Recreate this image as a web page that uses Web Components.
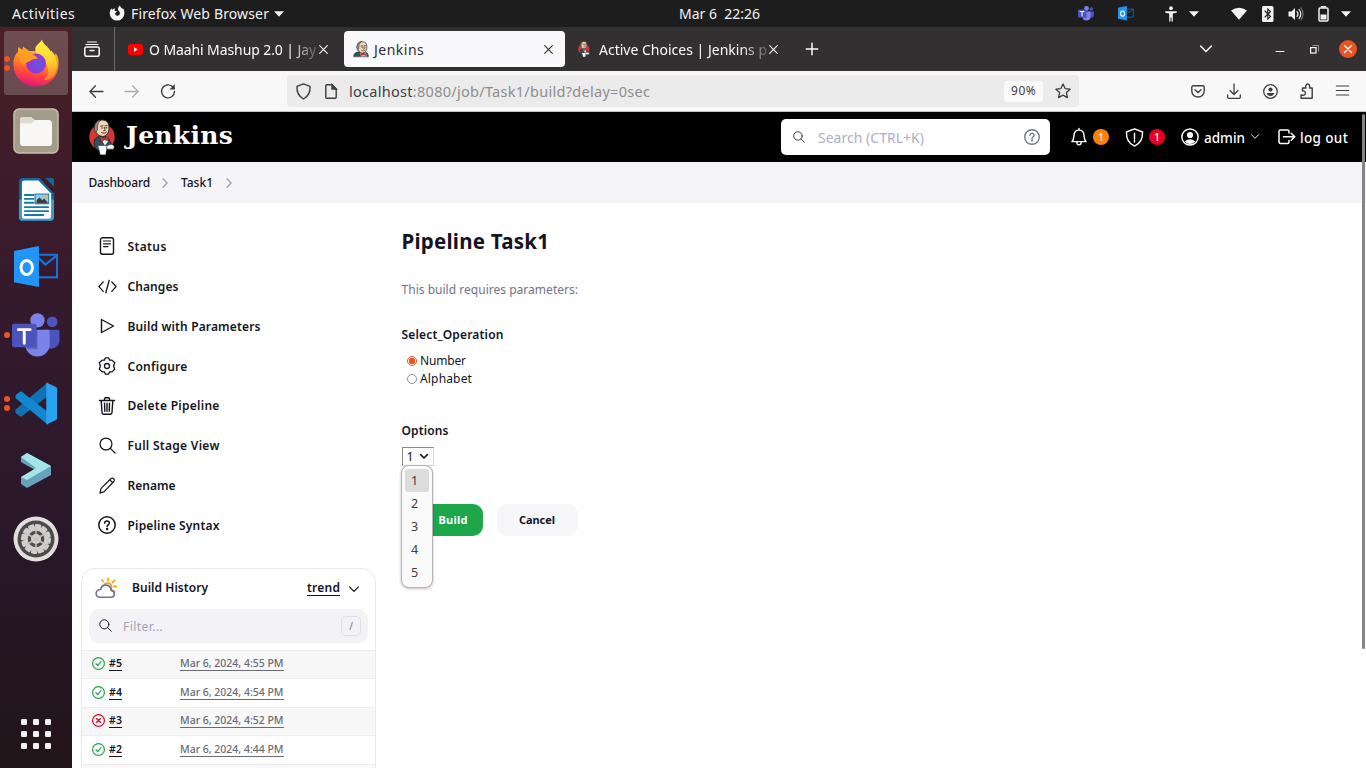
<!DOCTYPE html>
<html lang="en">
<head>
<meta charset="utf-8">
<title>Jenkins</title>
<style>
html,body{margin:0;height:100%;overflow:hidden;background:#fff;font-family:"Noto Sans","Open Sans",sans-serif}
</style>
</head>
<body>
<desk-top></desk-top>
<script>
const define = (name, html, setup) => {
  const tpl = document.createElement('template');
  tpl.innerHTML = html;
  customElements.define(name, class extends HTMLElement {
    connectedCallback() {
      if (this.shadowRoot) return;
      this.attachShadow({mode: 'open'}).append(tpl.content.cloneNode(true));
      if (setup) setup(this, this.shadowRoot);
    }
  });
};

const head = `
<path d="M6 9C6 3.500 8.500 1 13.300 1S20 4 20 9c0 4.500-2 8-6.200 8.500C9.500 17 6 14 6 9z" fill="#f0d6b7" stroke="#231f20" stroke-width=".9"/>
<path d="M5.800 12C4.500 6 6.500 1.500 12.500.8 9 3 9 5.500 8.300 8c.7 2-.2 4.500-1.300 5z" fill="#958c84" stroke="#231f20" stroke-width=".6"/>
<path d="M11.500 7.300l2.500-.5M16 6.800l2.200-.2M12.500 9h1.300M16.700 8.800H18M15.400 8.500l.9 3-1.600.2M12.500 13.500c2 1.200 4 .8 5-.3" fill="none" stroke="#3c2c22" stroke-width=".9"/>`;
const butler = `
<ellipse cx="13" cy="18" rx="12.700" ry="13" fill="#d33833"/>
<path d="M5.500 21c1.500-3 5-4 8-4 4 0 6.500 2 7 5l3 5-4 3-6 2-6-1.500c-2-3-3-6-2-9.500z" fill="#335061" stroke="#15202a" stroke-width=".8"/>
<path d="M10.500 17.500l4.500 2.500 3.500-2.500.5 5-3 4z" fill="#f5f2ee"/>${head}
<path d="M11.500 18l3.800 1.600 3.700-1.900.6 4.300-4-1.200-3.600 2.200z" fill="#d33833" stroke="#571210" stroke-width=".5"/>
<path d="M9.500 27h8.300l-1.300 8.500h-5z" fill="#fff" stroke="#ddd" stroke-width=".3"/>
<path d="M17.500 28c1-3 6-3.500 7.800-.8l-.8 3h-6z" fill="#f3f0ec" stroke="#333" stroke-width=".5"/>`;
const bust = `
<path d="M1 22c0-4 3-6 8-6.500h6c5 .5 7 3 7 6.500z" fill="#335061" stroke="#15202a" stroke-width="1"/>
<path d="M10 16l4 4 4.500-4 1 6h-8z" fill="#f5f2ee"/>${head}
<path d="M10.500 17.500l4 1.500 4-1.500.5 4-4.500-1-4 1z" fill="#d33833"/>`;

const helpMark = `<circle cx="9" cy="9" r="8.200"/><path d="M6.600 7.100C6.700 5.600 7.700 4.900 9 4.900s2.400.8 2.400 2.100c0 1.700-2.300 1.700-2.300 3.600"/><circle cx="9.100" cy="12.900" r=".5" fill="currentColor"/>`;
const loupe = `<circle cx="7.400" cy="7.400" r="6.300"/><path d="M12 12l5 5"/>`;
const teams = `<circle cx="41" cy="9" r="5.500" fill="#4b53bc"/><path d="M32 17h15q1.500 0 1.500 2v9a9 9 0 0 1-14 7z" fill="#4b53bc"/><circle cx="26" cy="7.500" r="7.300" fill="#7b83eb"/><path d="M15 17h22q1.500 0 1.500 2v13a12.500 12.500 0 0 1-25 0z" fill="#7b83eb"/><path d="M14 17h12v20h-10q-2.500-3-2.500-7z" fill="#000" opacity=".22"/><rect x="0" y="11" width="25" height="24" rx="2" fill="#4b53bc"/><path d="M6.500 17h12M12.500 17v14" stroke="#fff" stroke-width="3" fill="none"/>`;
const outlook = `<path d="M24 9h20v23H24" fill="none" stroke="#1a73d9" stroke-width="2"/><path d="M25 12l7 7L44 9.500" fill="none" stroke="#1a73d9" stroke-width="2.200"/><path d="M0 5L25.500 0v42L0 37z" fill="#2196f8"/><ellipse cx="13" cy="22" rx="5.800" ry="7.200" fill="none" stroke="#fff" stroke-width="3"/>`;
const ok = `<circle cx="6.500" cy="6.500" r="5.900" stroke="#1ea64b"/><path d="M4 6.800l1.800 1.700 3.200-4" stroke="#1ea64b"/>`;
const icons = {
  // name: [width, height, stroke width, markup]
  swirl: [16,16,0,`<path d="M8 15.600A7.400 7.400 0 0 1 .7 8.200C.7 6 1.600 4.300 2.700 3.200l.4 1.500C4 3.900 5.300 3.500 6.300 3.600 5.500 4.600 5.300 5.600 6.200 6c.8.300 1.500.1 1.900.6-.4 1-1.700.9-2 2C6 10 7.300 10.900 8.700 10.700c1.500-.2 2.400-1.400 2.200-2.900C10.700 6.400 9.200 6 9 4.600 8.800 3 9.800 1.200 11 .4c.2 1.800 1.700 2.500 2.600 3.700l.3-.9c1.200 1.400 1.500 3.200 1.500 5A7.400 7.400 0 0 1 8 15.600z" fill="currentColor"/>`],
  tri: [10,6,0,`<path d="M0 .3h10L5 5.800z" fill="currentColor"/>`],
  teamsS: [49,44,0,teams], outlookS: [46,42,0,outlook],
  a11y: [12,16,0,`<circle cx="6" cy="2.200" r="1.900" fill="currentColor"/><path d="M.2 5.200h11.600v1.500L7.800 7.400v8H6.500v-4h-1v4H4.200v-8L.2 6.700z" fill="currentColor"/>`],
  wifi: [16,13,0,`<path d="M0 3.500Q8-2.200 16 3.500L8 12.800z" fill="currentColor"/>`],
  bt: [12,16,1.1,`<rect width="11.500" height="16" rx="1.500" fill="#f2f2f2" stroke="none"/><path d="M3 5l5.500 5.500L5.800 13V3l2.700 2.500L3 11" stroke="#1d1d1d"/>`],
  vol: [16,14,1.2,`<path d="M.5 4.500h3L7 1v12L3.500 9.500h-3z" fill="currentColor" stroke="none"/><path d="M9 4.500q2 2.500 0 5M11 2.500q3.500 4.500 0 9"/><path d="M13 1q4 6 0 12" opacity=".4"/>`],
  batt: [11,16,1.5,`<path d="M3.500.8h4" stroke-width="1.600"/><rect x="1" y="2" width="9" height="13" rx="1"/><rect x="2.500" y="8.500" width="6" height="5" fill="currentColor" stroke="none"/>`],
  view: [16,16,1.5,`<path d="M3.500 1h9M2 3.500h12" stroke-width="1.200"/><rect x=".8" y="6" width="14.400" height="9.200" rx="1.500"/><path d="M6 9.500h4"/>`],
  yt: [15,11,0,`<rect width="15" height="11" rx="2.500" fill="#f00"/><path d="M6 3.200L10 5.500 6 7.800z" fill="#fff"/>`],
  x: [9,9,1.1,`<path d="M.7.7l7.600 7.600M8.300.7L.7 8.300"/>`],
  plus: [12,12,1.5,`<path d="M6 .3v11.400M.3 6h11.400"/>`],
  down: [12,8,1.4,`<path d="M.6 1L6 6.500 11.400 1"/>`],
  downBold: [12,8,2.3,`<path d="M1 1L6 6 11 1"/>`],
  min: [8,10,1,`<path d="M0 7.500h8"/>`],
  rest: [9,9,1.2,`<rect x=".6" y="2.600" width="5.400" height="5.400"/><path d="M3 .5h5.500v5.500" opacity=".5" stroke-width="1"/>`],
  close: [18,18,1.4,`<circle cx="9" cy="9" r="9" fill="#e95420" stroke="none"/><path d="M5.500 5.500l7 7M12.500 5.500l-7 7" stroke="#fff"/>`],
  back: [14,13,1.3,`<path d="M6.500.7L.9 6.500l5.600 5.800M1 6.500h13"/>`],
  fwd: [14,13,1.3,`<path d="M7.500.7l5.600 5.800-5.600 5.800M13 6.500H0"/>`],
  reload: [16,16,1.4,`<path d="M14.500 8.500A6.500 6.500 0 1 1 12.300 3.500l2 2"/><path d="M14.800 1v5.500H9.500z" fill="currentColor" stroke="none"/>`],
  shield: [15,17,1.4,`<path d="M7.500.9L14 3.300c.4 5-1.500 10-6.500 12.700C2.500 13.300.6 8.300 1 3.300z" stroke-linejoin="round"/>`],
  page: [12,15,1.4,`<path d="M2 .8h5l4.200 4.200v8.200q0 1-1 1H1.800q-1 0-1-1V1.800q0-1 1.200-1z"/><path d="M7 .8V5h4.200z" fill="currentColor"/>`],
  star: [16,16,1.3,`<path d="M8 1l2.100 4.600 5 .6-3.700 3.400 1 5L8 12.100l-4.400 2.500 1-5L.9 6.200l5-.6z" stroke-linejoin="round"/>`],
  pocket: [14,13,1.4,`<path d="M2.300.8h9.400q1.500 0 1.500 1.500V6c0 3.800-3 6-6.200 6S.8 9.800.8 6V2.300Q.8.800 2.300.8z"/><path d="M4 4.800l3 2.700 3-2.700"/>`],
  dl: [14,15,1.3,`<path d="M7 0v10M3 6.500l4 4 4-4M.7 11v2.300q0 1 1 1h10.600q1 0 1-1V11"/>`],
  acct: [15,15,1.3,`<circle cx="7.500" cy="7.500" r="6.800"/><circle cx="7.500" cy="5.600" r="2.100" fill="currentColor" stroke="none"/><path d="M3.800 9h7.400q-.5 3-3.700 3T3.800 9z" fill="currentColor" stroke="none"/>`],
  ext: [14,16,1.4,`<path d="M1 15.200h11.200V5H9.500c.5-2 0-4-1.800-4s-2.300 2-1.800 4H2.500v3c4-.8 4 5 0 4.200L1 12z" stroke-linejoin="round"/>`],
  menu: [13,11,1.1,`<path d="M.3 1h12.400M.3 5.500h12.400M.3 10h12.400"/>`],
  butler: [27,36,0,butler], bust: [23,23,0,bust],
  loupe: [18,18,1.3,loupe], help: [18,18,1.5,helpMark],
  bell: [17,19,1.5,`<path d="M1 14.500c2-2 2-4 2.200-7C3.500 4 5.700 2.300 8.500 2.300S13.500 4 13.800 7.500c.2 3 .2 5 2.200 7zM8.500 2.300V.6M6.200 15.500c.2 3.300 4.400 3.300 4.600 0" stroke-linejoin="round"/>`],
  warn: [20,20,1.5,`<path d="M10 1l8.500 3.200C18.700 11 16 16.500 10 19 4 16.500 1.300 11 1.500 4.200z" stroke-linejoin="round"/><path d="M10 5.500v6M10 13v1.800"/>`],
  person: [18,18,1.5,`<circle cx="9" cy="9" r="8.100"/><circle cx="9" cy="7" r="3.100" fill="currentColor" stroke="none"/><path d="M3.800 13.500q5.200-4.500 10.400 0Q9 18.500 3.800 13.500z" fill="currentColor" stroke="none"/>`],
  out: [18,16,1.5,`<path d="M11 4V2.500Q11 1 9.500 1h-7Q1 1 1 2.500v10Q1 14.500 2.500 14.500h7q1.500 0 1.500-1.500v-1.500M5.500 7.800H16.500M13.200 4.300l3.500 3.500-3.500 3.500"/>`],
  chev: [6,10,1.5,`<path d="M1 .8L5 5 1 9.200"/>`],
  status: [18,18,1.4,`<rect x="2.500" y=".8" width="13" height="16.400" rx="2"/><path d="M5.500 4h7M5.500 6.800h7M5.500 9.600h4.500" stroke-width="1.200"/>`],
  code: [20,16,1.4,`<path d="M5.500 3L1 8l4.500 5M14.500 3L19 8l-4.500 5M11.800 1.500l-3.600 13"/>`],
  play: [18,18,1.4,`<path d="M3.500 2.500v13L15.500 9z" stroke-linejoin="round"/>`],
  gear: [18,18,1.3,`<circle cx="9" cy="9" r="2.500"/><path d="M7.300.9h3.400l.9 2.300 2.300-.1 2.800 2.700L15.600 9l1.100 3.200-2.800 2.700-2.300-.1-.9 2.300H7.300l-.9-2.300-2.300.1-2.800-2.700L2.400 9 1.300 5.800l2.800-2.700 2.300.1z" stroke-linejoin="round"/>`],
  trash: [18,18,1.4,`<path d="M1.500 3.500h15M3.200 3.500l.8 12q.1 1.700 1.500 1.700h7q1.400 0 1.500-1.700l.8-12M6.500 3.500V2q0-1.200 1-1.200h3q1 0 1 1.200v1.500M6.500 6.300l.3 8M9 6.300v8M11.500 6.300l-.3 8"/>`],
  pencil: [18,18,1.3,`<path d="M1 17l1.200-5L12.800 1.600q1.300-1 2.700.2t.4 2.700L5.500 15.500zM11.500 3l3 3" stroke-linejoin="round"/>`],
  cloud: [22,21,1.6,`<g stroke="#fea500"><path d="M9 7.500c1-4 8-3 7.500 1.800q0 1.500-1 2.700"/><path d="M8.300 3.500L7 2M13 2.500V.3M17.500 4.500L19.500 2.500M19 8.500h2.300M18 12.500l1.500 1.500" stroke-width="1.800"/></g><path d="M5 19.200h10.500c5 0 5-6 .8-6.800C15.500 5.500 6.500 5.500 5.700 11.500 0 11.500-.5 19 5 19.200z" stroke="#73738c"/>`],
  ok: [13,13,1.2,ok],
  bad: [13,13,1.2,`<circle cx="6.500" cy="6.500" r="5.900" stroke="#e6001f"/><path d="M4.700 4.700l3.600 3.600M8.300 4.700L4.700 8.300" stroke="#e6001f" stroke-width="1.400"/>`],
  firefox: [46,47,0,`<defs><linearGradient id="f" x1=".6" y1="0" x2=".35" y2="1"><stop offset="0" stop-color="#ffc02b"/><stop offset=".4" stop-color="#ff8a22"/><stop offset=".7" stop-color="#ff4540"/><stop offset="1" stop-color="#e2117e"/></linearGradient><radialGradient id="g" cx=".6" cy=".55"><stop offset="0" stop-color="#6059e8"/><stop offset="1" stop-color="#9636cf"/></radialGradient><linearGradient id="h" x1="0" x2="0" y1="0" y2="1"><stop offset="0" stop-color="#fff44a"/><stop offset=".55" stop-color="#ffd02e"/><stop offset="1" stop-color="#ff7a2c"/></linearGradient></defs><path d="M5 13Q4.500 10 5.500 8l4 3 .5-3.500L16 12l14 0 8 1-1-1.500q4 2 5 5.500l.5-3C45 17 46 21 45.500 26a22.500 21.500 0 0 1-45 0C0 20 2 15.500 5 13z" fill="url(#f)"/><path d="M29 .5c.5 5 7 7 8.500 12l.5-1c7 7 8 19 2 26-4 4-8 4-9 3 4-4 5-9 3-14S24 18 22.500 12 27 5 29 .5z" fill="url(#h)"/><circle cx="23" cy="24.500" r="10" fill="url(#g)"/><path d="M7 16c6-5 15-1 18 3.500l-6 1c-4 4-7 2-8 6-3-2-5-6-4-10.500z" fill="#ff9a22"/><path d="M10 9l6 4 5 4.500-10 2z" fill="#ffa020"/>`],
  files: [46,46,0,`<rect x="1" y="1" width="44" height="44" rx="5" fill="#a29c89" stroke="#c5bfae" stroke-width="1.500"/><path d="M7 12q0-3 3-3h8l4 4v7H7z" fill="#dedbd0"/><rect x="7" y="12" width="32" height="26" rx="3.500" fill="#f8f7f5"/><path d="M7 12q0-3 3-3h8l4 3-4 3.500H7z" fill="#dedbd0"/>`],
  writer: [38,46,0,`<path d="M5 1h17l15 16v24q0 4-4 4H5q-4 0-4-4V5q0-4 4-4z" fill="#126699"/><path d="M1 23h36v18q0 4-4 4H5q-4 0-4-4z" fill="#4197bf"/><path d="M6 3.500h15L34 17v23q0 3-3 3H7q-3 0-3-3V6q0-2.500 2-2.500z" fill="#fafcfe"/><path d="M28 1h7q2 0 2 2v7z" fill="#126699"/><path d="M7 18.500h9M7 22.500h9M7 26.500h9M7 31h24M7 35h24M7 39h19" stroke="#1878a8" stroke-width="1.900"/><rect x="17.500" y="17.500" width="14" height="10" fill="#93c8ec" stroke="#1878a8"/><path d="M19 27v-3l3-3 3 3 2-2 4 5z" fill="#3c3c3c"/><circle cx="29" cy="20" r="1.700" fill="#f8b620"/>`],
  vscode: [44,44,0,`<path d="M1 32l4 3q1 .7 2 0L34 14V0L1 28q-1.500 2 0 4z" fill="#0f72b5"/><path d="M1 13l4-3q1-.7 2 0l27 21v13L1 17q-1.500-2 0-4z" fill="#1287d0"/><path d="M32 .5L42 5q1 .5 1 2v30q0 1.500-1 2l-10 4.500z" fill="#28a3ef"/>`],
  arrow: [32,38,0,`<path d="M1 34v3l30-14v-5z" fill="#102f36"/><path d="M1 5l6-4 24 13v9L7 36l-6-4v-7l14-7L1 10z" fill="#68a3bb"/><path d="M1 5l6-4 24 13L7 28l-6-3 15-9z" fill="#a3e6e8"/>`],
  settings: [46,46,0,`<circle cx="23" cy="23" r="22.500" fill="#e0dfdd"/><circle cx="23" cy="23" r="18.500" fill="#4b4b49"/><circle cx="23" cy="23" r="13.500" fill="none" stroke="#d0cfcc" stroke-width="3" stroke-dasharray="3.500 3.570"/><circle cx="23" cy="23" r="10.500" fill="none" stroke="#cecdca" stroke-width="4.500"/><circle cx="23" cy="23" r="5" fill="#d8d7d5"/><path d="M23 23V12M23 23l-9.500 5.500M23 23l9.500 5.500M23 23l-9.500-5.500M23 23l9.500-5.500M23 23v11" stroke="#c4c3c0" stroke-width="1.500"/>`],
  grid: [30,30,0,[0,1,2].map(r=>[0,1,2].map(c=>`<rect x="${c*12}" y="${r*12}" width="6" height="6" rx="1.300" fill="#f2f0f0"/>`).join('')).join('')]
};

define('ui-icon', `<style>:host{display:block;flex:none;line-height:0}svg{display:block;overflow:visible}</style><svg fill="none" stroke="currentColor" stroke-linecap="round" aria-hidden="true"></svg>`, (el, root) => {
  const [w, h, sw, body] = icons[el.getAttribute('name')];
  const svg = root.querySelector('svg');
  const width = +(el.getAttribute('w') || w);
  svg.setAttribute('viewBox', `0 0 ${w} ${h}`);
  svg.setAttribute('width', width);
  svg.setAttribute('height', width * h / w);
  if (sw) svg.setAttribute('stroke-width', sw); else svg.setAttribute('stroke', 'none');
  svg.innerHTML = body;
});

// A single line of text tracked so that it fills the width given in "w".
define('fit-text', `<style>:host{display:block;flex:none;white-space:pre;line-height:20px;height:20px}span{display:inline-block}</style><span><slot></slot></span>`, (el, root) => {
  const w = +el.getAttribute('w');
  el.style.width = w + 'px';
  const span = root.querySelector('span');
  const n = el.textContent.length;
  const natural = span.getBoundingClientRect().width;
  span.style.letterSpacing = ((w - natural) / Math.max(1, n - .5)) + 'px';
});

define('top-bar', `<style>
:host{display:flex;height:27px;background:#1d1d1d;color:#f2f2f2;align-items:center;font-size:14px;flex:none}
.l{display:flex;align-items:center;width:679px;padding-left:12px;box-sizing:border-box}
.r{display:flex;align-items:center;margin-left:auto;padding-right:15px}
</style>
<div class="l"><fit-text w="63">Activities</fit-text><ui-icon name="swirl" style="margin:0 6px 2px 34px"></ui-icon><fit-text w="138">Firefox Web Browser</fit-text><ui-icon name="tri" style="margin-left:5px"></ui-icon></div>
<fit-text w="81">Mar 6  22:26</fit-text>
<div class="r">
<ui-icon name="teamsS" w="16"></ui-icon><ui-icon name="outlookS" w="16" style="margin-left:24px"></ui-icon>
<ui-icon name="a11y" style="margin-left:31px"></ui-icon><ui-icon name="tri" style="margin-left:12px"></ui-icon>
<ui-icon name="wifi" style="margin-left:32px"></ui-icon><ui-icon name="bt" style="margin-left:15px"></ui-icon>
<ui-icon name="vol" style="margin-left:14px"></ui-icon><ui-icon name="batt" style="margin-left:14px"></ui-icon><ui-icon name="tri" style="margin-left:12px"></ui-icon></div>`);

define('dock-item', `<style>
:host{display:grid;grid-template-columns:7px 46px 7px;justify-content:space-between;align-items:center;justify-items:center;width:64px;height:64px;margin:0 4px 4px;flex:none;border-radius:3px}
:host([active]){background:rgba(255,255,255,.2)}
.d{display:flex;flex-direction:column;gap:3px;margin-left:-1px}
.d i{width:6px;height:6px;border-radius:50%;background:#e95420}
</style><div class="d"></div><span></span>`, (el, root) => {
  root.querySelector('.d').innerHTML = '<i></i>'.repeat(+el.getAttribute('dots') || 0);
  const icon = document.createElement('ui-icon');
  icon.setAttribute('name', el.getAttribute('icon'));
  if (el.hasAttribute('w')) icon.setAttribute('w', el.getAttribute('w'));
  if (el.hasAttribute('lift')) icon.style.marginBottom = el.getAttribute('lift') + 'px';
  root.querySelector('span').replaceWith(icon);
});

define('app-dock', `<style>:host{display:flex;flex-direction:column;width:72px;flex:none;box-sizing:border-box;padding-top:4px;background:linear-gradient(#4a2125,#3f1c29 18%,#341a2d 38%,#2c182b 65%,#281728 72%,#221519)}
.apps{margin:auto 0 19px 21px}</style>
<dock-item icon="firefox" dots="2" lift="2" active></dock-item><dock-item icon="files"></dock-item><dock-item icon="writer" w="37"></dock-item><dock-item icon="outlookS" w="45"></dock-item><dock-item icon="teamsS" w="48" dots="1"></dock-item><dock-item icon="vscode" w="43" dots="2"></dock-item><dock-item icon="arrow"></dock-item><dock-item icon="settings"></dock-item>
<ui-icon name="grid" class="apps"></ui-icon>`);

define('browser-tab', `<style>
:host{display:flex;align-items:center;width:221px;height:36px;box-sizing:border-box;padding:0 12px 0 9px;color:#fbfbfe;font-size:14px;border-radius:4px;flex:none}
:host([active]){background:#f9f9fb;color:#2f2e34}
:host([fade]) .t{-webkit-mask:linear-gradient(90deg,#000 84%,rgba(0,0,0,.2));mask:linear-gradient(90deg,#000 84%,rgba(0,0,0,.2))}
.i{width:15px;display:flex;justify-content:center;margin-right:6px}
.t{padding-top:1px}
.x{margin-left:auto}
</style><div class="i"><slot name="icon"></slot></div><div class="t"><slot></slot></div><ui-icon class="x" name="x"></ui-icon>`);

define('tab-strip', `<style>
:host{display:flex;align-items:center;height:44px;background:#333031;color:#fbfbfe;flex:none;padding-left:12px;padding-right:9px}
.s{width:1px;align-self:stretch;background:#6a6768;margin:0 4px 0 14px}
.r{margin-left:auto;display:flex;align-items:center}
</style><ui-icon name="view"></ui-icon><div class="s"></div>
<browser-tab fade style="margin-right:4px"><ui-icon slot="icon" name="yt"></ui-icon><fit-text w="167">O Maahi Mashup 2.0 | Jay</fit-text></browser-tab>
<browser-tab active><ui-icon slot="icon" name="bust" w="16"></ui-icon><fit-text w="50">Jenkins</fit-text></browser-tab>
<browser-tab fade style="margin-left:4px"><ui-icon slot="icon" name="butler" w="12" style="margin-right:3px"></ui-icon><fit-text w="168">Active Choices | Jenkins p</fit-text></browser-tab>
<ui-icon name="plus" style="margin-left:16px"></ui-icon>
<div class="r"><ui-icon name="down"></ui-icon><ui-icon name="min" style="margin-left:64px"></ui-icon><ui-icon name="rest" style="margin-left:26px"></ui-icon><ui-icon name="close" style="margin-left:20px"></ui-icon></div>`);

define('url-bar', `<style>
:host{display:flex;align-items:center;height:40px;background:#f8f8f8;border-bottom:1px solid #c4c4c4;color:#3f3d42;padding:0 17px 0 17px;flex:none}
.u{display:flex;align-items:center;width:792px;height:32px;box-sizing:border-box;margin-left:111px;background:#ebebeb;border-radius:4px;padding:0 8px 0 9px;font-size:14.500px}
.z{margin-left:auto;background:#fafafa;border-radius:3px;height:21px;width:39px;display:flex;align-items:center;justify-content:center;font-size:12px}
.u em{font-style:normal;color:#8e8d90}
.r{display:flex;align-items:center;margin-left:auto}
</style>
<ui-icon name="back"></ui-icon><ui-icon name="fwd" style="margin-left:22px;opacity:.4"></ui-icon><ui-icon name="reload" style="margin-left:21px"></ui-icon>
<div class="u"><ui-icon name="shield"></ui-icon><ui-icon name="page" style="margin:0 12px 0 14px"></ui-icon><fit-text w="301">localhost<em>:8080/job/Task1/build?delay=0sec</em></fit-text><div class="z"><fit-text w="25">90%</fit-text></div><ui-icon name="star" style="margin-left:12px"></ui-icon></div>
<div class="r"><ui-icon name="pocket"></ui-icon><ui-icon name="dl" style="margin-left:22px"></ui-icon><ui-icon name="acct" style="margin-left:22px"></ui-icon><ui-icon name="ext" style="margin-left:22px"></ui-icon><ui-icon name="menu" style="margin-left:22px;margin-bottom:2px"></ui-icon></div>`);

define('count-badge', `<style>:host{display:grid;place-items:center;width:16px;height:16px;border-radius:50%;color:#fff;font-size:10.500px;font-weight:500;line-height:16px;flex:none}</style><slot></slot>`);

define('page-header', `<style>
:host{display:flex;align-items:center;height:50px;background:#000;color:#fff;padding:0 18px 0 17px;font-size:13.500px;font-weight:500;flex:none}
.logo{font:bold 25px/30px "DejaVu Serif",serif;margin:0 0 13px 10px}
.s{display:flex;align-items:center;width:269px;height:36px;background:#fff;border-radius:5px;margin-left:auto;color:#22222e;box-sizing:border-box;padding:0 10px 0 12px;font-size:14px;font-weight:400}
.s fit-text{color:#aeaec3;margin-left:13px}
fit-text:not(.logo){padding-top:2px}
</style>
<ui-icon name="butler"></ui-icon><fit-text class="logo" w="107">Jenkins</fit-text>
<div class="s"><ui-icon name="loupe" w="12"></ui-icon><fit-text w="106">Search (CTRL+K)</fit-text><ui-icon name="help" w="16" style="margin-left:auto;color:#73738c"></ui-icon></div>
<ui-icon name="bell" w="16" style="margin-left:21px"></ui-icon><count-badge style="background:#fe820a;margin-left:6px">1</count-badge>
<ui-icon name="warn" w="19" style="margin-left:16px"></ui-icon><count-badge style="background:#e6001f;margin-left:5px">1</count-badge>
<ui-icon name="person" style="margin-left:16px"></ui-icon><fit-text w="41" style="margin-left:5px">admin</fit-text><ui-icon name="down" w="8" style="margin-left:6px"></ui-icon>
<ui-icon name="out" style="margin-left:19px"></ui-icon><fit-text w="48" style="margin-left:4px">log out</fit-text>`);

define('crumb-bar', `<style>:host{display:flex;align-items:center;height:41px;background:#f5f5f8;padding-left:16.500px;font-size:12px;font-weight:500;color:#14141f;flex:none}ui-icon{color:#a3a3b5}</style>
<fit-text w="61.5">Dashboard</fit-text><ui-icon name="chev" style="margin:0 13px 0 12px"></ui-icon><fit-text w="32">Task1</fit-text><ui-icon name="chev" style="margin-left:13px"></ui-icon>`);

define('side-task', `<style>:host{display:flex;align-items:center;height:39.860px;padding-left:25px;color:#14141f;font-size:12px;font-weight:600}.i{width:20px;display:flex;justify-content:center;margin:0 10.500px 1px 0}</style><div class="i"><slot name="icon"></slot></div><slot></slot>`);

define('build-row', `<style>:host{display:flex;align-items:center;height:28.500px;box-sizing:border-box;border-top:1px solid #ececf1;padding:0 0 2px 9.500px;font-size:10.500px;font-weight:500;color:#14141f}
:host([odd]){background:#f7f7f7}
.n{border-bottom:1px solid #14141f;height:14px;line-height:14px;margin-left:4.500px;font-weight:600}
.d{border-bottom:1px solid #6b6b73;height:14px;line-height:14px;margin-left:58px;color:#6b6b73}
</style><div></div>`, (el, root) => {
  root.querySelector('div').replaceWith(Object.assign(document.createElement('template'), {innerHTML:
    `<ui-icon name="${el.getAttribute('state')}"></ui-icon><fit-text class="n" w="13">${el.getAttribute('number')}</fit-text><fit-text class="d" w="103.5">${el.textContent}</fit-text>`}).content);
});

define('build-history', `<style>
:host{display:block;width:293px;height:260px;border:1px solid #e8e8ef;border-radius:14px 14px 0 0;margin:22px 0 0 9px;overflow:hidden;color:#14141f;background:#fff}
.h{display:flex;align-items:center;height:38px;padding:0 16px 0 13px;font-size:12px;font-weight:600}
.f{display:flex;align-items:center;height:34px;margin:2px 7px 7px;background:#f2f2f7;border-radius:10px;padding:0 7px 0 10px;font-size:12px}
.k{margin-left:auto;width:18px;height:18px;border:1px solid #dedee6;border-radius:5px;display:grid;place-items:center;color:#73738c;font-size:10px}
</style>
<div class="h"><ui-icon name="cloud" style="margin-top:2px"></ui-icon><fit-text w="76" style="margin:1px 0 0 15px">Build History</fit-text><fit-text w="33" style="margin:1px 0 0 auto;height:14px;line-height:13px;border-bottom:1px solid">trend</fit-text><ui-icon name="down" w="10" style="margin:3px 0 0 9px;"></ui-icon></div>
<div class="f"><ui-icon name="loupe" w="13"></ui-icon><fit-text w="40" style="margin:2px 0 0 11px;color:#a3a3b5">Filter...</fit-text><div class="k">/</div></div>
<build-row state="ok" number="#5" odd>Mar 6, 2024, 4:55 PM</build-row><build-row state="ok" number="#4">Mar 6, 2024, 4:54 PM</build-row><build-row state="bad" number="#3" odd>Mar 6, 2024, 4:52 PM</build-row><build-row state="ok" number="#2">Mar 6, 2024, 4:44 PM</build-row><div style="height:28px;background:#f7f7f7;border-top:1px solid #ececf1"></div>`);

define('side-panel', `<style>:host{display:block;width:329.500px;flex:none;padding-top:24px;box-sizing:border-box}</style>
<side-task><ui-icon slot="icon" name="status"></ui-icon><fit-text w="39">Status</fit-text></side-task>
<side-task><ui-icon slot="icon" name="code" w="19"></ui-icon><fit-text w="51">Changes</fit-text></side-task>
<side-task><ui-icon slot="icon" name="play"></ui-icon><fit-text w="133">Build with Parameters</fit-text></side-task>
<side-task><ui-icon slot="icon" name="gear"></ui-icon><fit-text w="60">Configure</fit-text></side-task>
<side-task><ui-icon slot="icon" name="trash"></ui-icon><fit-text w="92">Delete Pipeline</fit-text></side-task>
<side-task><ui-icon slot="icon" name="loupe" w="17"></ui-icon><fit-text w="92">Full Stage View</fit-text></side-task>
<side-task><ui-icon slot="icon" name="pencil" w="17"></ui-icon><fit-text w="48">Rename</fit-text></side-task>
<side-task><ui-icon slot="icon" name="help"></ui-icon><fit-text w="92">Pipeline Syntax</fit-text></side-task>
<build-history></build-history>`);

define('radio-choice', `<style>:host{display:flex;align-items:center;height:18px;padding-left:5.500px;font-size:12px;color:#14141f}
i{width:8px;height:8px;border:1px solid #8f8f9d;border-radius:50%;margin-right:3px;background:#fff}
:host([checked]) i{border-color:#e95420;background:radial-gradient(circle,#e95420 3px,#fff 3.500px)}</style><i></i><slot></slot>`);

define('select-box', `<style>
:host{display:block;position:relative;width:32px;height:20px}
.b{display:flex;align-items:center;justify-content:space-between;box-sizing:border-box;height:19px;border:1px solid #d5d5d5;border-top-color:#8a8a8a;border-left-color:#8a8a8a;padding:0 5px 0 4px;font-size:12.500px;color:#14141f}
.m{position:absolute;left:-.5px;top:18px;width:32px;height:123px;box-sizing:border-box;border:1px solid #b4b4b4;border-radius:8px;background:#fafafa;padding:3px;box-shadow:0 1px 3px rgba(0,0,0,.25);z-index:2;color:#3d3d3d;font-size:12.500px}
.m div{height:23px;display:flex;align-items:center;padding-left:6px;border-radius:3px}
.m .on{background:#dcdcdc}
</style><div class="b"><fit-text w="7">1</fit-text><ui-icon name="downBold" w="8"></ui-icon></div>
<div class="m"><div class="on">1</div><div>2</div><div>3</div><div>4</div><div>5</div></div>`);

define('jenkins-button', `<style>:host{display:grid;place-items:center;width:81px;height:32px;border-radius:10px;background:#f6f6f9;color:#14141f;font-size:11px;font-weight:700}
:host([primary]){background:#1ea64b;color:#fff;justify-items:start;padding-left:37px;box-sizing:border-box}</style><slot></slot>`);

define('build-form', `<style>
:host{display:block;color:#14141f;padding-top:23px;font-size:12px}
h1{margin:0;font-size:20.500px;font-weight:700}
h1 fit-text{height:30px;line-height:30px}
.d{color:#73738c;margin-top:24px}
.l{font-weight:600}
.b{display:flex;gap:14px;margin-top:37px}
</style>
<h1><fit-text w="147.5">Pipeline Task1</fit-text></h1>
<fit-text class="d" w="176.5">This build requires parameters:</fit-text>
<fit-text class="l" w="102" style="margin:25px 0 7px">Select_Operation</fit-text>
<radio-choice checked><fit-text w="46">Number</fit-text></radio-choice>
<radio-choice><fit-text w="52">Alphabet</fit-text></radio-choice>
<fit-text class="l" w="47" style="margin:33px 0 6px">Options</fit-text>
<select-box></select-box>
<div class="b"><jenkins-button primary><fit-text w="29">Build</fit-text></jenkins-button><jenkins-button><fit-text w="36">Cancel</fit-text></jenkins-button></div>`);

define('desk-top', `<style>
:host{display:flex;flex-direction:column;width:1366px;height:768px;overflow:hidden}
.m{display:flex;flex:1;min-height:0}
.w{display:flex;flex-direction:column;flex:1;min-width:0;position:relative}
.p{display:flex;flex:1;min-height:0;overflow:hidden}
.sb{position:absolute;right:1px;top:87px;width:3px;height:535px;border-radius:2px;background:#858585}
</style><top-bar></top-bar><div class="m"><app-dock></app-dock><div class="w"><tab-strip></tab-strip><url-bar></url-bar><page-header></page-header><crumb-bar></crumb-bar><div class="p"><side-panel></side-panel><build-form></build-form></div><div class="sb"></div></div></div>`);
</script>
</body>
</html>
